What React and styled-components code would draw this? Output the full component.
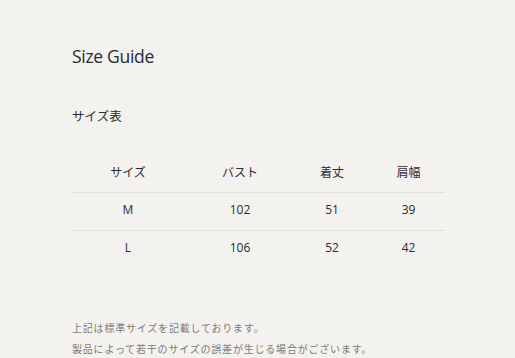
import React from 'react';
import styled, { createGlobalStyle } from 'styled-components';

const GlobalStyle = createGlobalStyle`
  html, body {
    margin: 0;
    padding: 0;
    background: #f3f2ee;
  }
  body {
    font-family: "Open Sans", "Noto Sans CJK JP", sans-serif;
    color: #2b2b33;
  }
`;

const Page = styled.div`
  width: 515px;
  height: 358px;
  box-sizing: border-box;
  padding: 44px 0 0 72px;
  overflow: hidden;
`;

const Title = styled.h1`
  margin: 0;
  font-family: "Open Sans", sans-serif;
  font-size: 17.5px;
  font-weight: 400;
  line-height: 24px;
  letter-spacing: -0.3px;
  color: #262a36;
`;

const SubTitle = styled.h2`
  margin: 40px 0 0;
  font-family: "Noto Sans CJK JP", sans-serif;
  font-size: 12.5px;
  font-weight: 400;
  line-height: 18px;
  transform: translateY(-1px);
`;

const Table = styled.div`
  margin-top: 25px;
  width: 373px;
  display: grid;
  grid-template-columns: 112px 112px 72px 77px;
`;

const Cell = styled.div`
  box-sizing: border-box;
  height: ${p => (p.$head ? '42px' : '38px')};
  padding-bottom: ${p => (p.$head ? '0' : '4px')};
  padding-left: ${p => (p.$shift ? '4px' : '0')};
  display: flex;
  align-items: center;
  justify-content: center;
  font-size: 12px;
  font-family: ${p => (p.$head ? '"Noto Sans CJK JP", sans-serif' : '"Open Sans", sans-serif')};
  border-bottom: ${p => (p.$last ? '1px solid transparent' : '1px solid #e2e1dc')};
`;

const Notes = styled.div`
  margin-top: 48px;
  font-family: "Noto Sans CJK JP", sans-serif;
  font-size: 10px;
  line-height: 21px;
  letter-spacing: 0.8px;
  color: #7a7a7a;
`;

const NoteLine = styled.p`
  margin: 0;
  height: 21px;
`;

const headers = ['サイズ', 'バスト', '着丈', '肩幅'];
const rows = [
  ['M', '102', '51', '39'],
  ['L', '106', '52', '42'],
];

export default function App() {
  return (
    <Page>
      <GlobalStyle />
      <Title>Size Guide</Title>
      <SubTitle>サイズ表</SubTitle>
      <Table>
        {headers.map((h, j) => (
          <Cell key={h} $head $shift={j === 3}>{h}</Cell>
        ))}
        {rows.map((r, i) =>
          r.map((v, j) => (
            <Cell key={`${i}-${j}`} $shift={j === 3} $last={i === rows.length - 1}>{v}</Cell>
          ))
        )}
      </Table>
      <Notes>
        <NoteLine>上記は標準サイズを記載しております。</NoteLine>
        <NoteLine>製品によって若干のサイズの誤差が生じる場合がございます。</NoteLine>
      </Notes>
    </Page>
  );
}
